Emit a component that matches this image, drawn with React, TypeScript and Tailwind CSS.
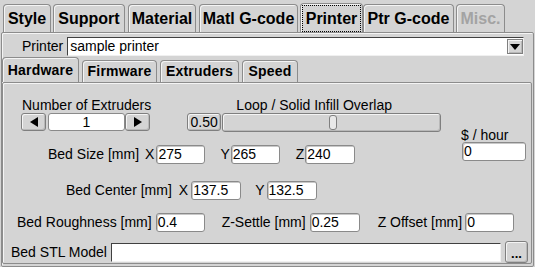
import React from 'react';

const topTabs = [
  { label: 'Style', w: 'w-[48px]', ml: 'ml-[3px]' },
  { label: 'Support', w: 'w-[72px]', ml: 'ml-[2px]' },
  { label: 'Material', w: 'w-[68px]', ml: 'ml-[3px]' },
  { label: 'Matl G-code', w: 'w-[99px]', ml: 'ml-[3px]' },
  { label: 'Printer', w: 'w-[63px]', ml: 'ml-[2px]', active: true },
  { label: 'Ptr G-code', w: 'w-[91px]', ml: 'ml-0' },
  { label: 'Misc.', w: 'w-[49px]', ml: 'ml-[2px]', disabled: true },
];

const subTabs = [
  { label: 'Hardware', w: 'w-[77px]', ml: 'ml-0', active: true },
  { label: 'Firmware', w: 'w-[75px]', ml: 'ml-[3px]' },
  { label: 'Extruders', w: 'w-[79px]', ml: 'ml-[3px]' },
  { label: 'Speed', w: 'w-[56px]', ml: 'ml-[3px]' },
];

function Field({ value, w, ml = 'ml-0' }: { value: string; w: string; ml?: string }) {
  return (
    <div
      className={`${w} ${ml} h-[19px] shrink-0 rounded-[3px] border border-[#8a8a8a] bg-white pl-[1px] text-[14px] leading-[17px] shadow-[inset_1px_1px_0_#c8c8c8]`}
    >
      {value}
    </div>
  );
}

function Arrow({ dir }: { dir: 'left' | 'right' | 'down' }) {
  const pts =
    dir === 'left' ? '8,0 8,10 0,5' : dir === 'right' ? '0,0 0,10 8,5' : '0,0 10,0 5,6';
  return (
    <svg width={dir === 'down' ? 10 : 8} height={dir === 'down' ? 6 : 10} viewBox={dir === 'down' ? '0 0 10 6' : '0 0 8 10'}>
      <polygon points={pts} fill="#000" />
    </svg>
  );
}

const btn =
  'rounded-[3px] border border-[#7f7f7f] bg-[#d4d4d4] shadow-[inset_1px_1px_0_#f4f4f4,inset_-1px_-1px_0_#b8b8b8]';

export default function App() {
  return (
    <div className="h-[267px] w-[535px] overflow-hidden bg-[#d4d4d4] font-['Liberation_Sans',Arial,sans-serif] text-[14px] text-black">
      {/* main tabs */}
      <div className="flex h-[32px] items-end">
        {topTabs.map((t) => (
          <div
            key={t.label}
            className={`${t.w} ${t.ml} ${t.active ? 'h-[29px] p-[1px] pb-0' : 'h-[28px]'} flex shrink-0 items-center justify-center rounded-t-[4px] border border-b-0 border-[#8c8c8c] bg-[#d4d4d4] text-[16px] font-bold shadow-[inset_1px_1px_0_#f4f4f4] ${t.disabled ? 'text-[#a3a3a3]' : ''}`}
          >
            {t.active ? (
              <div className="flex h-full w-full items-center justify-center border border-dotted border-black">
                {t.label}
              </div>
            ) : (
              t.label
            )}
          </div>
        ))}
      </div>

      {/* outer panel */}
      <div className="ml-[1px] h-[235px] w-[533px] rounded-[2px] border border-[#8c8c8c] shadow-[inset_1px_1px_0_#f4f4f4]">
        <div className="mt-[4px] flex h-[19px] items-center">
          <span className="ml-[20px]">Printer</span>
          <div className="ml-[4px] flex h-[19px] w-[457px] items-center border border-[#404040] border-b-[#f0f0f0] border-r-[#f0f0f0] bg-white">
            <span className="flex-1 pl-[2px] leading-[17px]">sample printer</span>
            <div className={`flex h-[15px] w-[16px] items-center justify-center ${btn} rounded-none`}>
              <Arrow dir="down" />
            </div>
          </div>
        </div>

        {/* sub tabs */}
        <div className="mt-[1px] flex h-[25px] items-end">
          {subTabs.map((t) => (
            <div
              key={t.label}
              className={`${t.w} ${t.ml} ${t.active ? 'h-[25px]' : 'h-[22px]'} flex shrink-0 items-center justify-center rounded-t-[4px] border border-b-0 border-[#8c8c8c] bg-[#d4d4d4] text-[14px] font-bold tracking-[0.2px] shadow-[inset_1px_1px_0_#f4f4f4]`}
            >
              {t.label}
            </div>
          ))}
        </div>

        {/* hardware panel */}
        <div className="h-[182px] w-[530px] rounded-[2px] border border-[#8c8c8c] shadow-[inset_1px_1px_0_#f4f4f4]">
          <div className="flex">
            <div className="w-[458px]">
              {/* extruders + slider */}
              <div className="mt-[14px] flex">
                <div className="ml-[18px] flex flex-col">
                  <span className="ml-[1px] h-[16px] leading-[16px]">Number of Extruders</span>
                  <div className="flex h-[18px]">
                    <div className={`flex w-[25px] items-center justify-center ${btn}`}>
                      <Arrow dir="left" />
                    </div>
                    <div className="ml-[2px] w-[77px] rounded-[3px] border border-[#8a8a8a] bg-white text-center leading-[16px]">
                      1
                    </div>
                    <div className={`w-[25px] ${btn} flex items-center justify-center`}>
                      <Arrow dir="right" />
                    </div>
                  </div>
                </div>
                <div className="ml-[36px] flex w-[254px] flex-col">
                  <span className="h-[16px] text-center leading-[16px]">Loop / Solid Infill Overlap</span>
                  <div className="flex h-[19px]">
                    <div className={`h-[18px] w-[34px] text-center leading-[16px] ${btn}`}>0.50</div>
                    <div className={`relative ml-[1px] flex-1 ${btn}`}>
                      <div className="absolute left-[106px] top-[1px] h-[15px] w-[8px] rounded-[3px] border border-[#7f7f7f] bg-[#e8e8e8]" />
                    </div>
                  </div>
                </div>
              </div>

              {/* bed size */}
              <div className="mt-[13px] flex h-[19px] items-center">
                <span className="ml-[45px]">Bed Size [mm]</span>
                <span className="ml-[6px]">X</span>
                <Field value="275" w="w-[49px]" ml="ml-[2px]" />
                <span className="ml-[15px]">Y</span>
                <Field value="265" w="w-[49px]" ml="ml-[1px]" />
                <span className="ml-[16px]">Z</span>
                <Field value="240" w="w-[50px]" ml="ml-[1px]" />
              </div>
            </div>
            <div className="mt-[44px] flex flex-col">
              <span className="h-[15px] leading-[16px]">$ / hour</span>
              <Field value="0" w="w-[64px]" ml="ml-[1px]" />
            </div>
          </div>

          {/* bed center */}
          <div className="mt-[17px] flex h-[19px] items-center">
            <span className="ml-[63px]">Bed Center [mm]</span>
            <span className="ml-[7px]">X</span>
            <Field value="137.5" w="w-[50px]" ml="ml-[3px]" />
            <span className="ml-[14px]">Y</span>
            <Field value="132.5" w="w-[50px]" ml="ml-[2px]" />
          </div>

          {/* roughness / settle / offset */}
          <div className="mt-[13px] flex h-[19px] items-center">
            <span className="ml-[14px]">Bed Roughness [mm]</span>
            <Field value="0.4" w="w-[49px]" ml="ml-[4px]" />
            <span className="ml-[17px]">Z-Settle [mm]</span>
            <Field value="0.25" w="w-[50px]" ml="ml-[4px]" />
            <span className="ml-[18px]">Z Offset [mm]</span>
            <Field value="0" w="w-[49px]" ml="ml-[3px]" />
          </div>

          {/* stl model */}
          <div className="mt-[9px] flex h-[22px] items-center">
            <span className="ml-[8px]">Bed STL Model</span>
            <div className="ml-[4px] h-[19px] w-[390px] border border-[#404040] border-b-[#f0f0f0] border-r-[#f0f0f0] bg-white" />
            <div className={`ml-[4px] flex h-[22px] w-[23px] items-end justify-center pb-[3px] text-[13px] font-bold leading-[10px] ${btn}`}>
              ...
            </div>
          </div>
        </div>
      </div>
    </div>
  );
}
